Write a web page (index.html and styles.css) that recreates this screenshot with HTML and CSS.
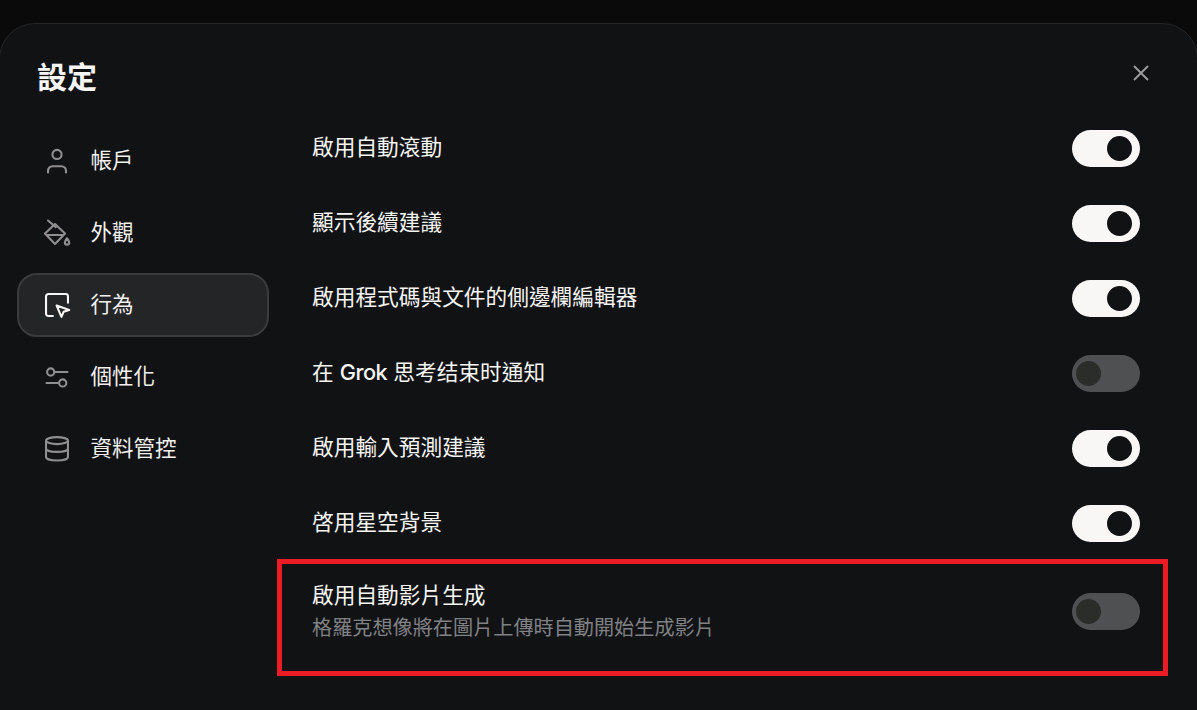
FILE: index.html
```html
<!DOCTYPE html>
<html lang="zh-Hant">
<head>
  <meta charset="UTF-8">
  <meta name="viewport" content="width=device-width, initial-scale=1.0">
  <title>設定</title>
  <link rel="stylesheet" href="styles.css">
</head>
<body>

<div class="dialog">
  <aside class="sidebar">
    <h1 class="title">設定</h1>
    <nav class="nav">
      <a class="nav-item">
        <svg class="nav-icon" viewBox="0 0 24 24"><circle cx="12" cy="6.400" r="3.900"/><path d="M4.300 21.800v-1.300a4 4 0 0 1 4-4h7.400a4 4 0 0 1 4 4v1.300"/></svg>
        <span>帳戶</span>
      </a>
      <a class="nav-item">
        <svg class="nav-icon" viewBox="0 0 24 24"><path d="M4.300 1.300L11 7"/><path d="M10.300 4.300L1.700 12.500 10.300 21.400 18.900 12.500z"/><path d="M3.500 13.700H17"/><path d="M20.600 16.500c1.200 1.600 1.900 2.600 1.900 3.600a1.900 1.900 0 0 1-3.800 0c0-1 .7-2 1.900-3.600z"/></svg>
        <span>外觀</span>
      </a>
      <a class="nav-item active">
        <svg class="nav-icon" viewBox="0 0 24 24"><path d="M8.500 21.400H4.600a2 2 0 0 1-2-2V4.600a2 2 0 0 1 2-2h14.800a2 2 0 0 1 2 2V10"/><path d="M11.700 12.500L22.500 16.200 17.700 17.800 15.800 22.200z"/></svg>
        <span>行為</span>
      </a>
      <a class="nav-item">
        <svg class="nav-icon" viewBox="0 0 24 24"><circle cx="6.600" cy="7.700" r="3.100"/><path d="M9.700 7.700H21"/><circle cx="16.900" cy="17.100" r="3.100"/><path d="M13.800 17.100H3"/></svg>
        <span>個性化</span>
      </a>
      <a class="nav-item">
        <svg class="nav-icon" viewBox="0 0 24 24"><ellipse cx="12" cy="4.800" rx="9.400" ry="3"/><path d="M2.600 4.800v14c0 1.700 4.200 3 9.400 3s9.400-1.300 9.400-3v-14"/><path d="M2.600 11.500c0 1.700 4.200 3 9.400 3s9.400-1.300 9.400-3"/></svg>
        <span>資料管控</span>
      </a>
    </nav>
  </aside>

  <main class="content">
    <button class="close" aria-label="關閉">
      <svg viewBox="0 0 16 16"><path d="M1 1l14 14M15 1L1 15"/></svg>
    </button>
    <div class="rows">
      <div class="row"><span class="label">啟用自動滾動</span><span class="switch on"></span></div>
      <div class="row"><span class="label">顯示後續建議</span><span class="switch on"></span></div>
      <div class="row"><span class="label">啟用程式碼與文件的側邊欄編輯器</span><span class="switch on"></span></div>
      <div class="row"><span class="label">在 <span class="latin">Grok</span> 思考结束时通知</span><span class="switch"></span></div>
      <div class="row"><span class="label">啟用輸入預測建議</span><span class="switch on"></span></div>
      <div class="row"><span class="label">啓用星空背景</span><span class="switch on"></span></div>
      <div class="row row-tall">
        <div class="row-text">
          <div class="label">啟用自動影片生成</div>
          <div class="hint">格羅克想像將在圖片上傳時自動開始生成影片</div>
        </div>
        <span class="switch"></span>
        <div class="highlight"></div>
      </div>
    </div>
  </main>
</div>

</body>
</html>
```

FILE: styles.css
```css
html, body {
  margin: 0;
  height: 100%;
}
body {
  height: 710px;
  overflow: hidden;
  padding-top: 23px;
  box-sizing: border-box;
  background-color: #0a0a0b;
  font-family: Inter, "Noto Sans CJK TC", sans-serif;
  color: #f7f6f4;
}
.dialog {
  display: flex;
  width: 1199px;
  height: 720px;
  margin-left: -1px;
  box-sizing: border-box;
  border: 1px solid #232526;
  border-radius: 36px 36px 0 0;
  background-color: #111214;
}

/* sidebar */
.sidebar {
  width: 277px;
  flex-shrink: 0;
  box-sizing: border-box;
  padding: 34px 8px 0 17px;
}
.title {
  margin: 0 0 33px 20px;
  font-size: 30px;
  line-height: 38px;
  font-weight: 600;
}
.nav {
  display: flex;
  flex-direction: column;
  gap: 8px;
}
.nav-item {
  display: flex;
  align-items: center;
  gap: 19.500px;
  height: 64px;
  box-sizing: border-box;
  padding-left: 24px;
  border: 2px solid transparent;
  border-radius: 20px;
  font-size: 21.500px;
  color: #f2f1ef;
}
.nav-item span {
  padding-bottom: 6px;
}
.nav-item.active {
  background-color: #242527;
  border-color: #3a3b3d;
}
.nav-icon {
  width: 28px;
  height: 28px;
  fill: none;
  stroke: #8f8f8f;
  stroke-width: 1.800;
  stroke-linecap: round;
  stroke-linejoin: round;
}
.active .nav-icon {
  stroke: #f7f6f4;
}

/* settings list */
.content {
  position: relative;
  flex-grow: 1;
  padding: 87px 57px 0 35px;
}
.close {
  position: absolute;
  top: 41px;
  right: 48px;
  width: 16px;
  height: 16px;
  padding: 0;
  border: 0;
  background: none;
}
.close svg {
  display: block;
  fill: none;
  stroke: #9a9a9a;
  stroke-width: 2;
}
.row {
  position: relative;
  display: flex;
  align-items: center;
  justify-content: space-between;
  height: 75px;
}
.row-tall {
  height: 101px;
}
.row-text {
  padding-bottom: 2px;
}
.label {
  padding-bottom: 4px;
  font-size: 21.700px;
  line-height: 30px;
  color: #f7f6f4;
}
.latin {
  font-weight: 500;
  letter-spacing: -0.500px;
}
.hint {
  font-size: 20.150px;
  line-height: 28px;
  color: #808184;
}
.switch {
  display: flex;
  align-items: center;
  justify-content: flex-start;
  width: 68px;
  height: 37px;
  box-sizing: border-box;
  padding: 0 4px;
  border-radius: 19px;
  background-color: #4f5052;
  flex-shrink: 0;
}
.switch::after {
  content: "";
  width: 25px;
  height: 25px;
  border-radius: 50%;
  background-color: #2b2d2b;
}
.switch.on {
  justify-content: flex-end;
  padding-right: 8px;
  background-color: #f8f7f5;
}
.switch.on::after {
  background-color: #111214;
}

/* red annotation box */
.highlight {
  position: absolute;
  left: -35px;
  top: -2px;
  width: 891px;
  height: 117px;
  box-sizing: border-box;
  border: 5px solid #ed1c24;
}
```
